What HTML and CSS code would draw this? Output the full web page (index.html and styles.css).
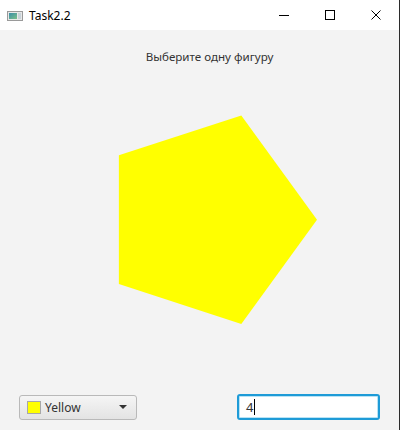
FILE: index.html
```html
<!DOCTYPE html>
<html>
<head>
<meta charset="utf-8">
<link rel="stylesheet" href="styles.css">
</head>
<body>
<div class="window">
  <div class="titlebar">
    <svg class="app-icon" width="16" height="10" viewBox="0 0 16 10">
      <defs>
        <linearGradient id="g" x1="0" y1="0" x2="1" y2="1">
          <stop offset="0" stop-color="#3a8fa8"/>
          <stop offset="1" stop-color="#7cc08a"/>
        </linearGradient>
      </defs>
      <rect x="0.5" y="0.5" width="15" height="9" fill="#e8e8e8" stroke="#9a9a9a"/>
      <rect x="2" y="2" width="8" height="6" fill="url(#g)"/>
      <rect x="11" y="2" width="3" height="6" fill="#c9d3d9"/>
    </svg>
    <span class="title">Task2.2</span>
    <div class="win-buttons">
      <svg class="wb" width="46" height="30" viewBox="0 0 46 30"><path d="M18 15.5h10" stroke="#000" stroke-width="1"/></svg>
      <svg class="wb" width="46" height="30" viewBox="0 0 46 30"><rect x="18.5" y="10.5" width="9" height="9" fill="none" stroke="#000"/></svg>
      <svg class="wb" width="46" height="30" viewBox="0 0 46 30"><path d="M18.5 10.5l9 9M27.5 10.5l-9 9" stroke="#000" stroke-width="1"/></svg>
    </div>
  </div>
  <div class="content">
    <div class="prompt">Выберите одну фигуру</div>
    <svg class="canvas" width="399" height="320" viewBox="0 0 399 320">
      <polygon fill="#ffff00" points="317,154.7 241.3,50.5 118.9,90.3 118.9,219.1 241.3,258.9"/>
    </svg>
    <div class="controls">
      <div class="combo">
        <span class="swatch"></span>
        <span class="combo-label">Yellow</span>
        <span class="arrow"></span>
      </div>
      <div class="field"><span class="field-text">4</span><span class="caret"></span></div>
    </div>
  </div>
</div>
</body>
</html>
```
FILE: styles.css
```css
html, body {
  margin: 0;
  padding: 0;
  width: 400px;
  height: 430px;
  overflow: hidden;
  background: #f3f3f3;
}
.window {
  width: 399px;
  height: 430px;
  border-right: 1px solid #2b2b2b;
  display: flex;
  flex-direction: column;
  font-family: "Noto Sans", "Open Sans", sans-serif;
}
.titlebar {
  height: 30px;
  background: #ffffff;
  display: flex;
  align-items: center;
  flex-shrink: 0;
}
.app-icon {
  margin-left: 7px;
  margin-top: 1px;
}
.title {
  margin-left: 6px;
  font-size: 12px;
  color: #000;
}
.win-buttons {
  margin-left: auto;
  display: flex;
}
.wb {
  display: block;
}
.content {
  flex: 1;
  background: #f3f3f3;
  display: flex;
  flex-direction: column;
}
.prompt {
  padding-top: 19px;
  padding-left: 20px;
  text-align: center;
  font-size: 11.6px;
  line-height: 16px;
  height: 16px;
  color: #333;
}
.canvas {
  display: block;
}
.controls {
  margin-top: 9px;
  display: flex;
  align-items: center;
  padding-left: 19px;
}
.combo {
  width: 116px;
  height: 23px;
  border: 1px solid #b9b9b9;
  border-radius: 3px;
  background: linear-gradient(#f5f5f5, #e3e3e3);
  display: flex;
  align-items: center;
  box-sizing: content-box;
}
.swatch {
  width: 12px;
  height: 11px;
  margin-left: 7px;
  background: #ffff00;
  border: 1px solid #a8a8a8;
}
.combo-label {
  margin-left: 4px;
  font-size: 12px;
  color: #333;
}
.arrow {
  margin-left: auto;
  margin-right: 9px;
  width: 0;
  height: 0;
  border-left: 4px solid transparent;
  border-right: 4px solid transparent;
  border-top: 4px solid #333;
}
.field {
  margin-left: 100px;
  width: 132px;
  height: 22px;
  border: 2px solid #1e9bd7;
  border-radius: 3px;
  background: #fff;
  box-shadow: inset 0 0 0 1px #b9e3f5;
  display: flex;
  align-items: center;
  padding-left: 7px;
  box-sizing: content-box;
}
.field-text {
  font-size: 13px;
  color: #333;
}
.caret {
  width: 1px;
  height: 16px;
  background: #000;
  margin-left: 1px;
}
```
